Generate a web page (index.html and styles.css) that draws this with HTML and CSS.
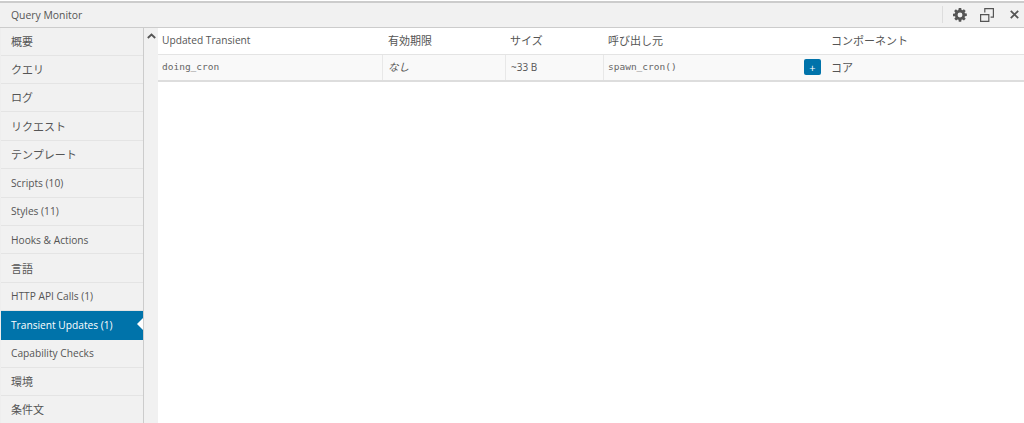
FILE: index.html
```html
<!DOCTYPE html>
<html lang="ja">
<head>
<meta charset="utf-8">
<title>Query Monitor</title>
<link rel="stylesheet" href="styles.css">
</head>
<body>
<div class="panel">
  <header class="title-bar">
    <span class="title">Query Monitor</span>
    <div class="controls">
      <svg class="icon gear" width="14" height="14" viewBox="0 0 16 16"><path fill="#555" fill-rule="evenodd" d="M6.600 0h2.800l.3 2.100 1.100.5 1.700-1.300 2 2-1.300 1.700.5 1.100 2.100.3v2.800l-2.100.3-.5 1.100 1.300 1.700-2 2-1.700-1.300-1.100.5-.3 2.100H6.600l-.3-2.100-1.100-.5-1.700 1.300-2-2 1.300-1.700-.5-1.100L0 9.400V6.600l2.100-.3.5-1.100-1.300-1.700 2-2 1.700 1.300 1.100-.5zM8 5.200a2.800 2.800 0 1 0 0 5.600 2.800 2.800 0 0 0 0-5.600z"/></svg>
      <svg class="icon dock" width="14" height="14" viewBox="0 0 14 14"><path fill="none" stroke="#555" stroke-width="1.200" d="M.6 6.600h8.200v6.800H.6zM4.800 4.500V.6h8.600v8.500h-2.800"/></svg>
      <svg class="icon close" width="9" height="9" viewBox="0 0 9 9"><path stroke="#555" stroke-width="1.800" d="M.8.800l7.400 7.400M8.200.800L.8 8.200"/></svg>
    </div>
  </header>
  <div class="body">
    <nav class="menu">
      <a class="item ja">概要</a>
      <a class="item ja">クエリ</a>
      <a class="item ja">ログ</a>
      <a class="item ja">リクエスト</a>
      <a class="item ja">テンプレート</a>
      <a class="item">Scripts (10)</a>
      <a class="item">Styles (11)</a>
      <a class="item">Hooks &amp; Actions</a>
      <a class="item ja">言語</a>
      <a class="item">HTTP API Calls (1)</a>
      <a class="item active">Transient Updates (1)</a>
      <a class="item">Capability Checks</a>
      <a class="item ja">環境</a>
      <a class="item ja">条件文</a>
    </nav>
    <div class="scroll-gutter">
      <svg width="9" height="6" viewBox="0 0 9 6"><path fill="none" stroke="#555" stroke-width="1.800" d="M.8 5l3.700-3.500L8.200 5"/></svg>
    </div>
    <main class="content">
      <div class="row head">
        <div class="cell c1">Updated Transient</div>
        <div class="cell c2 ja">有効期限</div>
        <div class="cell c3 ja">サイズ</div>
        <div class="cell c4 ja">呼び出し元</div>
        <div class="cell c5 ja">コンポーネント</div>
      </div>
      <div class="row data">
        <div class="cell c1 mono">doing_cron</div>
        <div class="cell c2 ja none">なし</div>
        <div class="cell c3 size">~33 B</div>
        <div class="cell c4 mono caller">spawn_cron()<span class="plus">+</span></div>
        <div class="cell c5 ja">コア</div>
      </div>
    </main>
  </div>
</div>
</body>
</html>
```
FILE: styles.css
```css
* { box-sizing: border-box; }
html, body { margin: 0; height: 100%; overflow: hidden; background: #fff; }
body { font-family: "Open Sans", "Noto Sans CJK JP", sans-serif; color: #555; font-size: 10.2px; }
.panel { height: 423px; display: flex; flex-direction: column; padding-top: 1px; }
.title-bar {
  height: 27px; flex: none; display: flex; align-items: center; justify-content: space-between;
  background: #f1f1f1; border-top: 2px solid #ccc; border-bottom: 1px solid #ccc;
  padding: 0 5px 1px 11px;
}
.title { font-size: 10.4px; color: #555; }
.controls { display: flex; align-items: center; }
.controls::before { content: ""; width: 1px; height: 17px; background: #ddd; }
.icon { display: block; flex: none; }
.gear { margin-left: 10px; }
.dock { margin-left: 13px; }
.close { margin-left: 16px; }
.body { flex: 1; display: flex; min-height: 0; }
.menu {
  width: 144px; flex: none; background: #f1f1f1; border-left: 1px solid #eee; border-right: 1px solid #ccc;
  display: flex; flex-direction: column;
}
.item {
  height: 28.4px; flex: none; display: flex; align-items: center; padding-left: 10px;
  border-bottom: 1px solid #e4e4e4; font-size: 10.2px; color: #555; white-space: nowrap;
}
.item:first-child { height: 27.6px; }
.item.ja { font-size: 11px; padding-bottom: 1px; }
.item.active { background: #0073aa; color: #fff; position: relative; border-bottom-color: #0073aa; }
.item.active::after {
  content: ""; position: absolute; right: 0; top: 7px;
  border-style: solid; border-width: 6px 6px 6px 0; border-color: transparent #fff transparent transparent;
}
.scroll-gutter { width: 14px; flex: none; background: #f1f1f1; padding: 5px 0 0 3px; }
.scroll-gutter svg { display: block; }
.content { flex: 1; min-width: 0; background: #fff; }
.row { display: grid; grid-template-columns: 224px 123px 98px 223px 198px; }
.head { height: 27px; border-bottom: 1px solid #e4e4e4; }
.data { height: 27px; background: #f9f9f9; border-bottom: 2px solid #ddd; }
.cell { display: flex; align-items: center; padding: 0 0 2px 5px; font-size: 10.2px; color: #555; white-space: nowrap; }
.cell.ja { font-size: 11px; }
.c1 { padding-left: 4px; }
.c2 { padding-left: 6px; }
.data .cell + .cell { border-left: 1px solid #e8e8e8; }
.data .cell.c5 { border-left: 0; }
.cell.none { font-size: 10.5px; font-style: italic; padding-left: 5px; }
.cell.mono { font-family: "DejaVu Sans Mono", "Liberation Mono", monospace; font-size: 9.5px; padding-left: 4px; color: #666; }
.cell.size { font-size: 10px; }
.caller { position: relative; }
.plus {
  position: absolute; right: 5px; top: 4px; width: 17px; height: 16px; border-radius: 2px;
  background: #0073aa; color: #fff; font-family: "Open Sans", sans-serif; font-size: 11px;
  display: flex; align-items: center; justify-content: center;
}
```
